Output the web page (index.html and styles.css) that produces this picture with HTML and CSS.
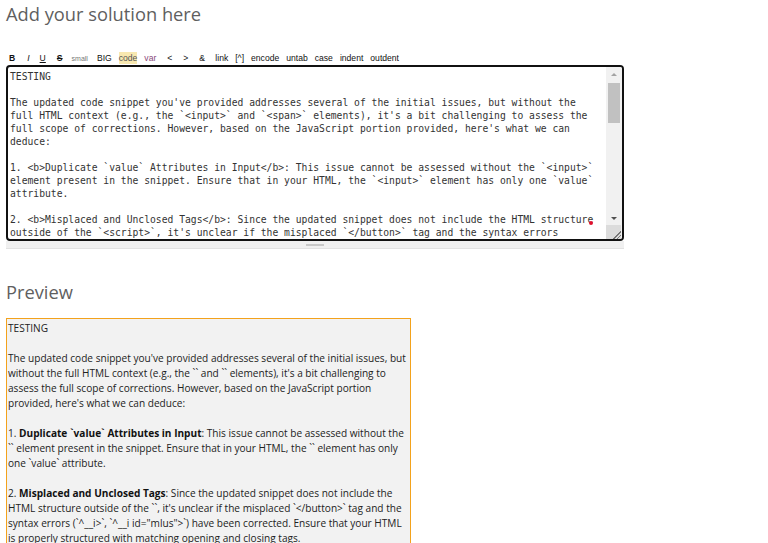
FILE: index.html
```html
<!DOCTYPE html>
<html lang="en">
<head>
    <meta charset="UTF-8">
    <title>Add your solution here</title>
    <link rel="stylesheet" href="styles.css">
</head>
<body>
    <h2 class="section-title">Add your solution here</h2>
    <div class="toolbar">
        <span class="tb tb-bold">B</span>
        <span class="tb tb-italic">I</span>
        <span class="tb tb-under">U</span>
        <span class="tb tb-strike">S</span>
        <span class="tb tb-small">small</span>
        <span class="tb">BIG</span>
        <span class="tb tb-code">code</span>
        <span class="tb tb-var">var</span>
        <span class="tb tb-sym">&lt;</span>
        <span class="tb tb-sym">&gt;</span>
        <span class="tb tb-sym">&amp;</span>
        <span class="tb">link</span>
        <span class="tb">[^]</span>
        <span class="tb">encode</span>
        <span class="tb">untab</span>
        <span class="tb">case</span>
        <span class="tb">indent</span>
        <span class="tb">outdent</span>
    </div>
    <div class="editor">
        <div class="editor-text">TESTING

The updated code snippet you've provided addresses several of the initial issues, but without the
full HTML context (e.g., the `&lt;input&gt;` and `&lt;span&gt;` elements), it's a bit challenging to assess the
full scope of corrections. However, based on the JavaScript portion provided, here's what we can
deduce:

1. &lt;b&gt;Duplicate `value` Attributes in Input&lt;/b&gt;: This issue cannot be assessed without the `&lt;input&gt;`
element present in the snippet. Ensure that in your HTML, the `&lt;input&gt;` element has only one `value`
attribute.

2. &lt;b&gt;Misplaced and Unclosed Tags&lt;/b&gt;: Since the updated snippet does not include the HTML structur<span class="spell">e</span>
outside of the `&lt;script&gt;`, it's unclear if the misplaced `&lt;/button&gt;` tag and the syntax errors</div>
        <div class="scrollbar">
            <div class="arrow arrow-up"></div>
            <div class="thumb"></div>
            <div class="track"></div>
            <div class="arrow arrow-down"></div>
            <div class="corner"></div>
        </div>
    </div>
    <div class="grippie"><span class="grip"></span></div>

    <h2 class="section-title preview-title">Preview</h2>
    <div class="preview">
        <p>TESTING</p>
        <p>The updated code snippet you've provided addresses several of the initial issues, but without the full HTML context (e.g., the `` and `` elements), it's a bit challenging to assess the full scope of corrections. However, based on the JavaScript portion provided, here's what we can deduce:</p>
        <p>1. <b>Duplicate `value` Attributes in Input</b>: This issue cannot be assessed without the `` element present in the snippet. Ensure that in your HTML, the `` element has only one `value` attribute.</p>
        <p>2. <b>Misplaced and Unclosed Tags</b>: Since the updated snippet does not include the HTML structure outside of the ``, it's unclear if the misplaced `&lt;/button&gt;` tag and the syntax errors (`^__i&gt;`, `^__i id="mlus"&gt;`) have been corrected. Ensure that your HTML is properly structured with matching opening and closing tags.</p>
    </div>
</body>
</html>
```
FILE: styles.css
```css
body {
    margin: 0;
    padding: 0 6px;
    background: #fff;
    font-family: 'Open Sans', sans-serif;
    color: #333;
}

.section-title {
    font-weight: normal;
    font-size: 18.3px;
    color: #5f5f5f;
    margin: 0;
    padding-top: 1px;
    line-height: 26px;
}

.toolbar {
    display: flex;
    align-items: baseline;
    gap: 7px;
    margin-top: 25px;
    padding-left: 3px;
    font-family: 'Liberation Sans', Arial, sans-serif;
    font-size: 8.6px;
    line-height: 12px;
    color: #111;
}

.tb-bold { font-weight: bold; margin-right: 5px; }
.tb-italic { font-style: italic; margin-right: 3px; }
.tb-under { text-decoration: underline; margin-right: 4px; }
.tb-strike { text-decoration: line-through; font-weight: bold; margin-right: 2px; }
.tb-small { font-size: 7px; color: #777; margin-right: 2px; }
.tb-code { background: #f8e8b0; color: #555; }
.tb-var { color: #8a4a7a; margin-right: 4px; }
.tb-sym { width: 9px; }

.editor {
    display: flex;
    width: 614px;
    height: 172px;
    border: 2px solid #111;
    border-radius: 4px;
    overflow: hidden;
}

.editor-text {
    flex: 1;
    white-space: pre;
    overflow: hidden;
    padding: 3px 0 0 2px;
    font-family: 'DejaVu Sans Mono', monospace;
    font-size: 9.7px;
    line-height: 13px;
    color: #333;
}

.spell {
    position: relative;
}

.spell::after {
    content: '';
    position: absolute;
    left: 2px;
    bottom: 0;
    width: 4px;
    height: 4px;
    border-radius: 50%;
    background: #e0102c;
}

.scrollbar {
    display: flex;
    flex-direction: column;
    width: 15px;
    background: #f1f1f1;
    padding-right: 1px;
}

.arrow {
    height: 14px;
    display: flex;
    align-items: center;
    justify-content: center;
}

.arrow::before {
    content: '';
    border-left: 3px solid transparent;
    border-right: 3px solid transparent;
}

.arrow-up::before { border-bottom: 3px solid #a3a3a3; }
.arrow-down::before { border-top: 3px solid #505050; }

.thumb {
    height: 40px;
    margin: 2px 1px 0 2px;
    background: #c1c1c1;
}

.track { flex: 1; }

.corner {
    height: 14px;
    background: linear-gradient(135deg, #dcdcdc 0 72%, #777 72% 76%, #dcdcdc 76% 84%, #777 84% 88%, #dcdcdc 88%);
}

.grippie {
    width: 618px;
    height: 7px;
    background: #f0f0f0;
    border-bottom: 1px solid #e2e2e2;
    display: flex;
    justify-content: center;
    align-items: center;
}

.grip {
    width: 18px;
    height: 2px;
    background: #c8c8c8;
}

.preview-title {
    margin-top: 29px;
}

.preview {
    width: 401px;
    margin-top: 13px;
    padding: 2px 1px 10px 1px;
    border: 1px solid #f3a21c;
    background: #f2f2f2;
    font-size: 10.1px;
    line-height: 15px;
    color: #222;
}

.preview p {
    margin: 0 0 15px 0;
}

.preview b {
    color: #111;
}
```
